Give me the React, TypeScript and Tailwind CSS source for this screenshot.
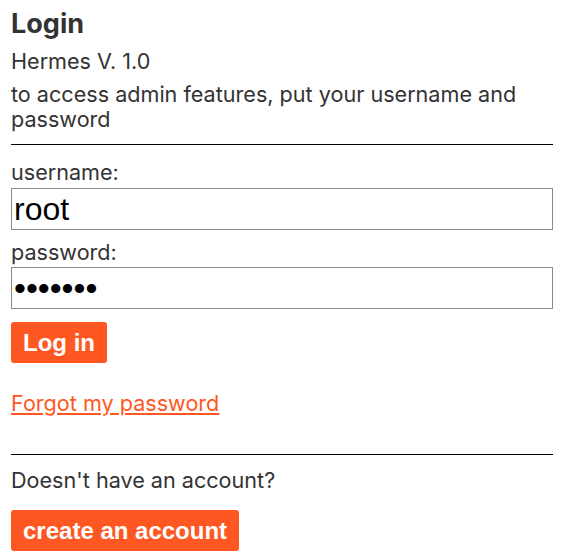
import { useState } from "react";

const orangeButton =
  "rounded-[3px] bg-[#ff5722] px-[12px] text-[24px] leading-[41px] font-bold text-white font-['Liberation_Sans',Arial,sans-serif]";

export default function App() {
  const [username, setUsername] = useState("root");
  const [password, setPassword] = useState("1234567");

  return (
    <div className="min-h-[558px] bg-white pl-[11px] pr-[8px] font-['Inter',sans-serif] text-[#333333]">
      <h1 className="pt-[8px] text-[27px] leading-[32px] font-bold">Login</h1>
      <p className="mt-[9px] text-[21.6px] leading-[25px]">Hermes V. 1.0</p>
      <p className="mt-[8px] text-[21.6px] leading-[25px]">
        to access admin features, put your username and password
      </p>
      <hr className="mt-[12px] border-t border-black" />

      <form className="flex flex-col" onSubmit={(e) => e.preventDefault()}>
        <label className="mt-[15px] text-[21.6px] leading-[25px]">username:</label>
        <input
          value={username}
          onChange={(e) => setUsername(e.target.value)}
          className="mt-[3px] h-[42px] border border-[#8a8a8a] px-[2px] text-[32px] text-black font-['Liberation_Sans',Arial,sans-serif] outline-none"
        />
        <label className="mt-[10px] text-[21.6px] leading-[25px]">password:</label>
        <input
          type="password"
          value={password}
          onChange={(e) => setPassword(e.target.value)}
          className="mt-[2px] h-[42px] border border-[#8a8a8a] px-[2px] text-[34px] text-black font-['Liberation_Sans',Arial,sans-serif] outline-none"
        />
        <div className="mt-[13px]">
          <button type="submit" className={orangeButton}>
            Log in
          </button>
        </div>
      </form>

      <a href="#" className="mt-[28px] block text-[21.6px] leading-[25px] text-[#ff5722] underline">
        Forgot my password
      </a>

      <hr className="mt-[38px] border-t border-black" />
      <p className="mt-[13px] text-[21.6px] leading-[25px]">Doesn't have an account?</p>
      <div className="mt-[17px]">
        <button className={orangeButton}>create an account</button>
      </div>
    </div>
  );
}
